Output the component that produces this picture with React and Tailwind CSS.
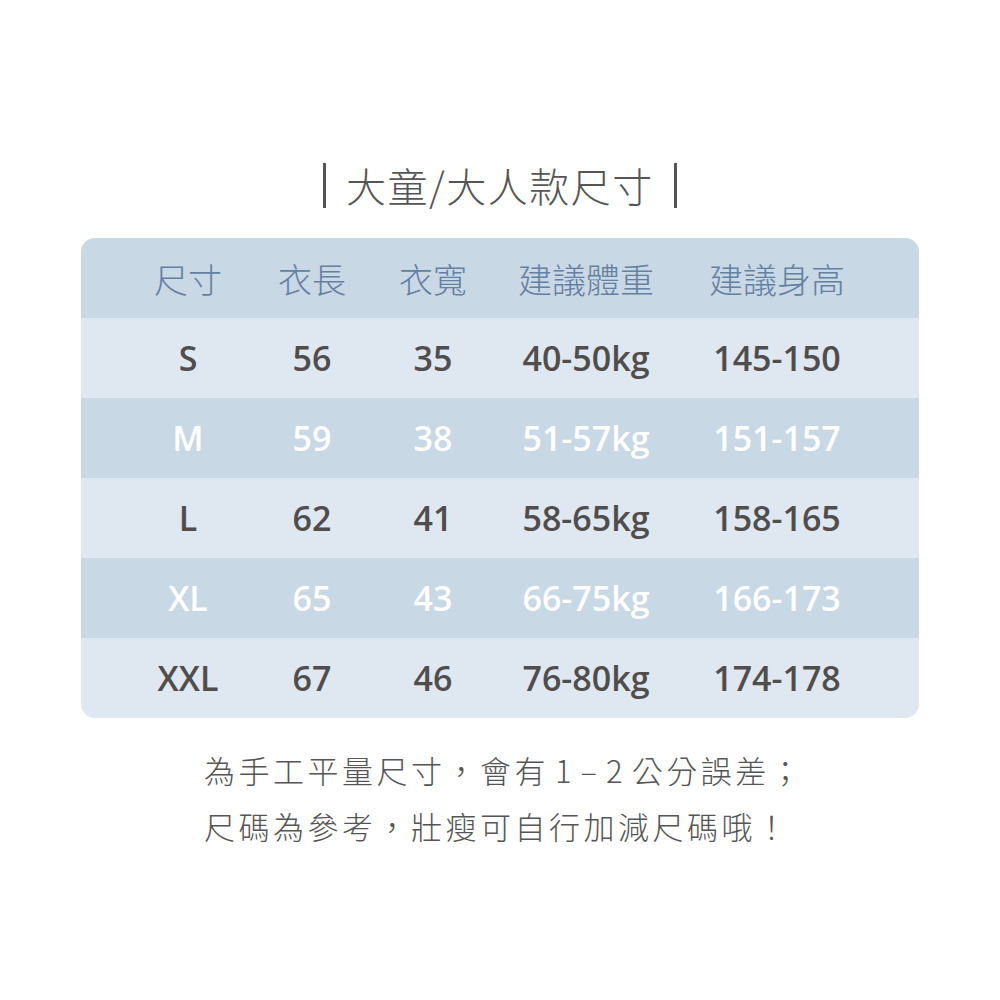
import React from 'react';

const rows = [
  { size: 'S', len: '56', wid: '35', kg: '40-50kg', h: '145-150', dark: false },
  { size: 'M', len: '59', wid: '38', kg: '51-57kg', h: '151-157', dark: true },
  { size: 'L', len: '62', wid: '41', kg: '58-65kg', h: '158-165', dark: false },
  { size: 'XL', len: '65', wid: '43', kg: '66-75kg', h: '166-173', dark: true },
  { size: 'XXL', len: '67', wid: '46', kg: '76-80kg', h: '174-178', dark: false },
];

const cjk = { fontFamily: '"Noto Sans CJK TC", "Noto Sans", sans-serif' };
const num = { fontFamily: '"Open Sans", "Noto Sans CJK TC", sans-serif' };

const cols = 'grid grid-cols-[120px_128px_114px_192px_190px] pl-[47px] items-center';

const App = () => {
  return (
    <div className="w-[1000px] h-[1000px] bg-white pt-[162px]" style={cjk}>
      <div className="flex items-center justify-center gap-[20px] h-[46px]">
        <div className="w-[3px] h-[45px] bg-[#555]" />
        <h1 className="text-[40px] font-light text-[#555] leading-none tracking-[1.5px]">大童/大人款尺寸</h1>
        <div className="w-[3px] h-[45px] bg-[#555]" />
      </div>

      <div className="mx-[81px] mt-[30px] rounded-[14px] overflow-hidden">
        <div className={`${cols} h-[80px] bg-[#c8d8e5] text-[#6580a0] text-[34px] font-light`}>
          <span className="text-center">尺寸</span>
          <span className="text-center">衣長</span>
          <span className="text-center">衣寬</span>
          <span className="text-center">建議體重</span>
          <span className="text-center">建議身高</span>
        </div>
        {rows.map((r) => (
          <div
            key={r.size}
            className={`${cols} h-[80px] text-[34px] font-semibold ${r.dark ? 'bg-[#c8d8e5] text-white' : 'bg-[#dfe7f0] text-[#504d4d]'}`}
            style={num}
          >
            <span className="text-center">{r.size}</span>
            <span className="text-center">{r.len}</span>
            <span className="text-center">{r.wid}</span>
            <span className="text-center">{r.kg}</span>
            <span className="text-center">{r.h}</span>
          </div>
        ))}
      </div>

      <div className="ml-[204px] mt-[24px] text-[31px] font-light text-[#555] leading-[56px] tracking-[3.5px]">
        <p>
          為手工平量尺寸，會有<span className="pl-[6px] tracking-[9px]">1–2</span>公分誤差；
        </p>
        <p>尺碼為參考，壯瘦可自行加減尺碼哦！</p>
      </div>
    </div>
  );
};

export default App;
